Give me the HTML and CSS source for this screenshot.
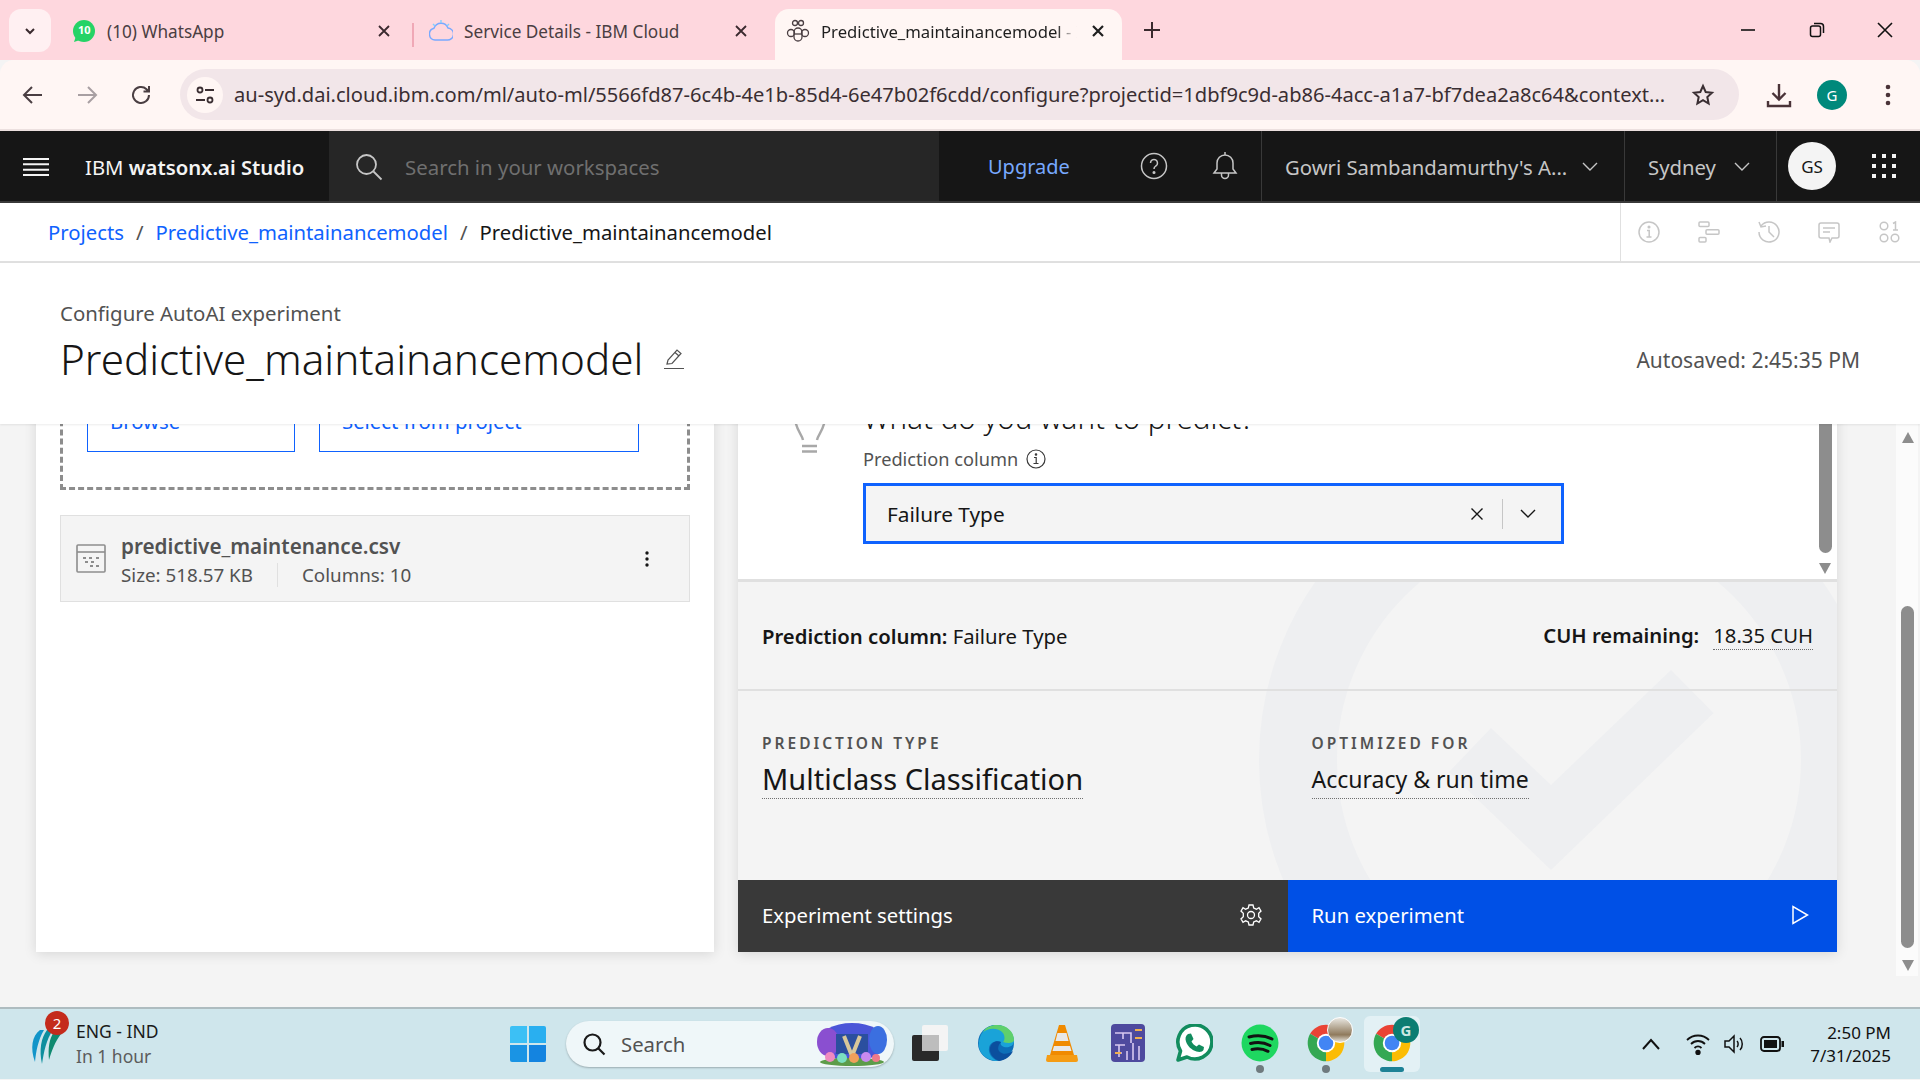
FILE: index.html
```html
<!DOCTYPE html>
<html lang="en">
<head>
    <meta charset="UTF-8">
    <title>Predictive_maintainancemodel - IBM watsonx.ai</title>
    <link rel="stylesheet" href="styles.css">
</head>
<body>
<svg class="defs" width="0" height="0">
    <symbol id="chrome" viewBox="0 0 48 48">
        <path d="M6.7 14A20 20 0 0 1 41.3 14L24 24Z" fill="#ea4335"/>
        <path d="M41.3 14A20 20 0 0 1 24 44L24 24Z" fill="#fbbc04"/>
        <path d="M24 44A20 20 0 0 1 6.7 14L24 24Z" fill="#34a853"/>
        <circle cx="24" cy="24" r="10" fill="#fff"/>
        <circle cx="24" cy="24" r="8" fill="#4285f4"/>
    </symbol>
</svg>

<!-- browser tabs -->
<div class="tabbar">
    <div class="tab-list">
        <svg width="14" height="14" viewBox="0 0 14 14"><path d="M3 5l4 4 4-4" fill="none" stroke="#3a2a2e" stroke-width="2"/></svg>
    </div>
    <div class="tab tab-one">
        <svg class="favicon" width="24" height="24" viewBox="0 0 24 24"><circle cx="12" cy="12" r="11" fill="#25d366"/><path d="M2 23l2-6 4 4z" fill="#25d366"/></svg>
        <span class="wa-count">10</span>
        <span class="tab-title">(10) WhatsApp</span>
        <svg class="tab-x" width="14" height="14" viewBox="0 0 14 14"><path d="M2 2l10 10M12 2L2 12" stroke="#3a2a2e" stroke-width="1.8"/></svg>
    </div>
    <div class="tab-sep"></div>
    <div class="tab tab-two">
        <svg class="favicon" width="24" height="24" viewBox="0 0 24 24" fill="none" stroke-width="1.4"><path d="M6 21a6 6 0 0 1-1-11.800A7.500 7.500 0 0 1 19 9a6 6 0 0 1-1 12z" stroke="#78a9ff"/><path d="M4 5l2 2M12 1v3M20 5l-2 2" stroke="#82cfff"/></svg>
        <span class="tab-title">Service Details - IBM Cloud</span>
        <svg class="tab-x" width="14" height="14" viewBox="0 0 14 14"><path d="M2 2l10 10M12 2L2 12" stroke="#3a2a2e" stroke-width="1.8"/></svg>
    </div>
    <div class="tab tab-active">
        <svg class="favicon" width="24" height="24" viewBox="0 0 24 24" fill="none" stroke="#4a3e42" stroke-width="1.300"><circle cx="9" cy="4" r="2.500"/><circle cx="15" cy="4" r="2.500"/><rect x="8" y="9" width="8" height="13" rx="4"/><circle cx="5" cy="14" r="3.500"/><circle cx="19" cy="14" r="3.500"/><path d="M8 15h8"/></svg>
        <span class="tab-title tab-title-fade">Predictive_maintainancemodel - IBM</span>
        <svg class="tab-x" width="14" height="14" viewBox="0 0 14 14"><path d="M2 2l10 10M12 2L2 12" stroke="#1f1f1f" stroke-width="2.200"/></svg>
    </div>
    <svg class="new-tab" width="18" height="18" viewBox="0 0 18 18"><path d="M9 1v16M1 9h16" stroke="#3a2a2e" stroke-width="2"/></svg>
    <div class="win-ctrls">
        <svg width="16" height="16" viewBox="0 0 16 16"><path d="M1 8h14" stroke="#111" stroke-width="1.600"/></svg>
        <svg width="16" height="16" viewBox="0 0 16 16" fill="none" stroke="#111" stroke-width="1.500"><rect x="1.500" y="4" width="10" height="10.500" rx="2"/><path d="M5 1.500h6.500a3 3 0 0 1 3 3V11"/></svg>
        <svg width="16" height="16" viewBox="0 0 16 16"><path d="M1 1l14 14M15 1L1 15" stroke="#111" stroke-width="1.600"/></svg>
    </div>
</div>

<!-- browser toolbar -->
<div class="toolbar">
    <svg class="tool" width="22" height="22" viewBox="0 0 22 22" fill="none" stroke="#4a3e42" stroke-width="2"><path d="M20 11H3M10 3l-8 8 8 8"/></svg>
    <svg class="tool" width="22" height="22" viewBox="0 0 22 22" fill="none" stroke="#a89fa2" stroke-width="2"><path d="M2 11h17M12 3l8 8-8 8"/></svg>
    <svg class="tool" width="22" height="22" viewBox="0 0 22 22" fill="none" stroke="#4a3e42" stroke-width="2"><path d="M19 11a8 8 0 1 1-2.500-5.800L19 7.500M19 2v5.500h-5.500"/></svg>
    <div class="omnibox">
        <span class="site-info">
            <svg width="22" height="22" viewBox="0 0 22 22" fill="none" stroke="#3a2e32" stroke-width="1.800"><circle cx="6" cy="6" r="2.500"/><path d="M11 6h9M2 16h9"/><circle cx="16" cy="16" r="2.500"/></svg>
        </span>
        <span class="url">au-syd.dai.cloud.ibm.com/ml/auto-ml/5566fd87-6c4b-4e1b-85d4-6e47b02f6cdd/configure?projectid=1dbf9c9d-ab86-4acc-a1a7-bf7dea2a8c64&amp;context...</span>
        <svg class="star" width="24" height="24" viewBox="0 0 24 24" fill="none" stroke="#3a2e32" stroke-width="2"><path d="M12 3l2.700 6 6.300.700-4.700 4.300 1.300 6.500-5.600-3.300-5.600 3.300 1.300-6.500L3 9.700 9.300 9z"/></svg>
    </div>
    <div class="tool-right">
        <svg width="26" height="26" viewBox="0 0 26 26" fill="none" stroke="#4a3338" stroke-width="2.400"><path d="M13 2v15M6.500 11l6.500 6.500 6.500-6.500M2 19v5h22v-5"/></svg>
        <span class="profile">G</span>
        <svg width="6" height="24" viewBox="0 0 6 24" fill="#4a3338"><circle cx="3" cy="4" r="2.300"/><circle cx="3" cy="12" r="2.300"/><circle cx="3" cy="20" r="2.300"/></svg>
    </div>
</div>

<!-- product header -->
<header class="app-header">
    <div class="brand">
        <svg width="26" height="20" viewBox="0 0 26 20" stroke="#f4f4f4" stroke-width="2"><path d="M0 2h26M0 7.300h26M0 12.700h26M0 18h26"/></svg>
        <span class="brand-name">IBM <b>watsonx.ai Studio</b></span>
    </div>
    <div class="app-search">
        <svg width="30" height="30" viewBox="0 0 30 30" fill="none" stroke="#c6c6c6" stroke-width="1.800"><circle cx="12.500" cy="12.500" r="9.500"/><path d="M19.500 19.500l8 8"/></svg>
        <span>Search in your workspaces</span>
    </div>
    <a class="upgrade">Upgrade</a>
    <div class="hdr-icons">
        <svg width="28" height="28" viewBox="0 0 28 28" fill="none" stroke="#c6c6c6" stroke-width="1.500"><circle cx="14" cy="14" r="12.500"/><path d="M10.500 11a3.500 3.500 0 1 1 5.300 3c-1.200.8-1.800 1.500-1.800 3"/><circle cx="14" cy="20.500" r=".8" fill="#c6c6c6"/></svg>
        <svg width="28" height="30" viewBox="0 0 28 30" fill="none" stroke="#c6c6c6" stroke-width="1.500"><path d="M3 22l3-4v-6a8 8 0 0 1 16 0v6l3 4zM14 4V1M10.500 22v2a3.500 3.500 0 0 0 7 0v-2"/></svg>
    </div>
    <div class="hdr-menu hdr-account"><span>Gowri Sambandamurthy's A...</span><svg width="16" height="10" viewBox="0 0 16 10" fill="none" stroke="#c6c6c6" stroke-width="1.400"><path d="M1 1l7 7 7-7"/></svg></div>
    <div class="hdr-menu hdr-region"><span>Sydney</span><svg width="16" height="10" viewBox="0 0 16 10" fill="none" stroke="#c6c6c6" stroke-width="1.400"><path d="M1 1l7 7 7-7"/></svg></div>
    <div class="hdr-user">
        <span class="avatar">GS</span>
        <svg width="24" height="24" viewBox="0 0 24 24" fill="#f4f4f4"><path d="M0 0h4v4H0zM10 0h4v4h-4zM20 0h4v4h-4zM0 10h4v4H0zM10 10h4v4h-4zM20 10h4v4h-4zM0 20h4v4H0zM10 20h4v4h-4zM20 20h4v4h-4z"/></svg>
    </div>
</header>

<!-- breadcrumb -->
<nav class="crumbs">
    <div class="crumb-path">
        <a>Projects</a><span class="slash">/</span><a>Predictive_maintainancemodel</a><span class="slash">/</span><span>Predictive_maintainancemodel</span>
    </div>
    <div class="crumb-tools">
        <svg width="22" height="22" viewBox="0 0 22 22" fill="none" stroke="#c6c6c6" stroke-width="1.500"><circle cx="11" cy="11" r="10"/><path d="M9 9.500h2.200v6.500M8.500 16h5"/><circle cx="11" cy="6" r=".8" fill="#c6c6c6"/></svg>
        <svg width="22" height="22" viewBox="0 0 22 22" fill="none" stroke="#c6c6c6" stroke-width="1.500"><rect x="1" y="1" width="10" height="4.500" rx="1"/><rect x="8" y="8.700" width="13" height="4.500" rx="1"/><rect x="1" y="16.500" width="7" height="4.500" rx="1"/></svg>
        <svg width="22" height="22" viewBox="0 0 22 22" fill="none" stroke="#c6c6c6" stroke-width="1.500"><path d="M3 5a10 10 0 1 1-2 6M1 1l2 5 5-1M11 5v6l5 5"/></svg>
        <svg width="22" height="22" viewBox="0 0 22 22" fill="none" stroke="#c6c6c6" stroke-width="1.500"><path d="M3 2h16a2 2 0 0 1 2 2v11a2 2 0 0 1-2 2h-5l-2 4-1-4H3a2 2 0 0 1-2-2V4a2 2 0 0 1 2-2zM5 7h12M5 11h7"/></svg>
        <svg width="22" height="22" viewBox="0 0 22 22" fill="none" stroke="#c6c6c6" stroke-width="1.500"><circle cx="6" cy="5" r="3.800"/><circle cx="6" cy="17" r="3.800"/><circle cx="17" cy="17" r="3.800"/><path d="M15 2.500L17.500 1v8M15 9h5"/></svg>
    </div>
</nav>

<!-- experiment title -->
<section class="title-bar">
    <div>
        <p class="kicker">Configure AutoAI experiment</p>
        <div class="title-row">
            <h1>Predictive_maintainancemodel</h1>
            <svg width="22" height="22" viewBox="0 0 22 22" fill="none" stroke="#525252" stroke-width="1.200"><path d="M1 20.500h20M4 16l1-4L14 2l4 3.500-9 10zM12 4.500l4 3.500"/></svg>
        </div>
    </div>
    <span class="autosaved">Autosaved: 2:45:35 PM</span>
</section>

<!-- scrolled work area -->
<main class="workspace">
    <section class="data-card">
        <div class="dropzone">
            <a class="btn-ghost btn-browse">Browse</a>
            <a class="btn-ghost btn-project">Select from project</a>
        </div>
        <div class="file-row">
            <svg width="30" height="29" viewBox="0 0 30 29" fill="none" stroke="#8d8d8d" stroke-width="1.600"><rect x="1" y="1" width="28" height="27" rx="1"/><path d="M1 8h28"/><path d="M7 14h3M13 14h3M20 14h3M9 18h3M15 18h3M14 22h3M20 22h3" stroke-width="1.800"/></svg>
            <div class="file-info">
                <div class="file-name">predictive_maintenance.csv</div>
                <div class="file-meta"><span>Size: 518.57 KB</span><i></i><span>Columns: 10</span></div>
            </div>
            <svg class="kebab" width="4" height="16" viewBox="0 0 4 16" fill="#161616"><circle cx="2" cy="2" r="1.700"/><circle cx="2" cy="8" r="1.700"/><circle cx="2" cy="14" r="1.700"/></svg>
        </div>
    </section>

    <section class="predict-card">
        <svg class="watermark" width="1099" height="370" viewBox="0 0 1099 370">
            <circle cx="831" cy="178" r="271" fill="none" stroke="#eeeff1" stroke-width="78"/>
            <path d="M933 88L975.600 131 813 288 711 190 753 146 813 203Z" fill="#eeeff1"/>
        </svg>
        <div class="predict-form">
            <svg class="bulb" width="32" height="60" viewBox="0 0 32 60" fill="none" stroke="#a8a8a8" stroke-width="2.400"><path d="M9 47C8 41 1 36 1 24a15 15 0 0 1 30 0c0 12-7 17-8 23M8 53h15M8 58.500h15"/></svg>
            <div class="form-fields">
                <h2>What do you want to predict?</h2>
                <div class="field-label">Prediction column
                    <svg width="20" height="20" viewBox="0 0 20 20" fill="none" stroke="#393939" stroke-width="1.200"><circle cx="10" cy="10" r="9"/><path d="M8 8.500h2.200v6M7.500 14.500h5"/><circle cx="10" cy="5.500" r=".7" fill="#393939"/></svg>
                </div>
                <div class="combo">
                    <span class="combo-value">Failure Type</span>
                    <svg width="14" height="14" viewBox="0 0 14 14"><path d="M1.500 1.500l11 11M12.500 1.500l-11 11" stroke="#161616" stroke-width="1.400"/></svg>
                    <i class="combo-sep"></i>
                    <svg width="16" height="10" viewBox="0 0 16 10" fill="none" stroke="#161616" stroke-width="1.400"><path d="M1 1l7 7 7-7"/></svg>
                </div>
            </div>
            <div class="inner-thumb"></div>
            <div class="inner-arrow"></div>
        </div>
        <div class="summary">
            <div><b>Prediction column:</b> Failure Type</div>
            <div class="cuh"><b>CUH remaining:</b><span class="dotted">18.35 CUH</span></div>
        </div>
        <div class="stats">
            <div class="stat">
                <div class="stat-label">PREDICTION TYPE</div>
                <span class="stat-value stat-large dotted">Multiclass Classification</span>
            </div>
            <div class="stat">
                <div class="stat-label">OPTIMIZED FOR</div>
                <span class="stat-value dotted">Accuracy &amp; run time</span>
            </div>
        </div>
        <div class="actions">
            <a class="action action-dark">Experiment settings
                <svg width="22" height="22" viewBox="0 0 22 22" fill="none" stroke="#fff" stroke-width="1.300"><circle cx="11" cy="11" r="3.500"/><path d="M9 1h4l.7 3 2.700 1.200 2.600-1.500 2 3.400-2.300 2.100v3.600l2.300 2.100-2 3.400-2.600-1.500-2.700 1.200-.7 3H9l-.7-3-2.700-1.200L3 18.300l-2-3.400 2.300-2.100V9.200L1 7.100l2-3.400 2.600 1.500 2.700-1.200z"/></svg>
            </a>
            <a class="action action-run">Run experiment
                <svg width="18" height="20" viewBox="0 0 18 20" fill="none" stroke="#fff" stroke-width="1.500"><path d="M2 1.500v17L16.500 10z"/></svg>
            </a>
        </div>
    </section>

    <div class="page-scroll">
        <span class="arrow-up"></span>
        <span class="page-thumb"></span>
        <span class="arrow-down"></span>
    </div>
</main>

<!-- windows taskbar -->
<footer class="taskbar">
    <div class="widget">
        <svg width="34" height="44" viewBox="0 0 34 44"><path d="M10 8C2 14 0 26 5 40c1-10 3-22 9-32z" fill="#1295c9"/><path d="M17 8c-6 8-8 20-5 34 2-12 4-24 11-34z" fill="#0d8f9e"/><path d="M24 10c-5 7-6 16-5 28 3-10 6-18 12-26z" fill="#0f8a70"/></svg>
        <span class="widget-badge">2</span>
        <div class="widget-text"><div>ENG - IND</div><div class="widget-sub">In 1 hour</div></div>
    </div>
    <div class="task-center">
        <svg class="win-logo" width="36" height="36" viewBox="0 0 36 36"><path d="M0 2a2 2 0 0 1 2-2h15v17H0z" fill="#3cc0f5"/><path d="M19 0h15a2 2 0 0 1 2 2v15H19z" fill="#29aff0"/><path d="M0 19h17v17H2a2 2 0 0 1-2-2z" fill="#1a94e4"/><path d="M19 19h17v15a2 2 0 0 1-2 2H19z" fill="#1484e0"/></svg>
        <div class="task-search">
            <svg width="24" height="24" viewBox="0 0 24 24" fill="none" stroke="#1a1a1a" stroke-width="2.200"><circle cx="10.500" cy="10.500" r="8"/><path d="M16.500 16.500l6 6"/></svg>
            <span>Search</span>
            <svg class="search-art" width="72" height="44" viewBox="0 0 72 44"><ellipse cx="36" cy="20" rx="34" ry="19" fill="#4a55d8"/><ellipse cx="12" cy="20" rx="11" ry="14" fill="#8a4fd0"/><ellipse cx="62" cy="18" rx="9" ry="14" fill="#3b6fe0"/><rect x="20" y="12" width="32" height="20" fill="#2b4f9e"/><path d="M28 14l8 20 8-20" fill="none" stroke="#d8c79a" stroke-width="4"/><ellipse cx="36" cy="40" rx="32" ry="4" fill="#5d9c4a"/><circle cx="14" cy="35" r="5" fill="#f08ac0"/><circle cx="26" cy="36" r="5" fill="#7be0c0"/><circle cx="38" cy="36" r="5" fill="#f0a05a"/><circle cx="50" cy="35" r="5" fill="#c88af0"/><circle cx="60" cy="36" r="4" fill="#f07a8a"/></svg>
        </div>
        <div class="task-apps">
            <span class="task-slot"><svg width="38" height="38" viewBox="0 0 38 38"><rect x="1" y="11" width="27" height="26" rx="2" fill="#2a2a2a"/><rect x="11" y="1" width="26" height="26" rx="2" fill="#f4f4f4"/><rect x="11" y="11" width="17" height="16" fill="#bdbdbd"/></svg></span>
            <span class="task-slot"><svg width="38" height="38" viewBox="0 0 38 38"><circle cx="19" cy="19" r="18" fill="#0d6fb8"/><path d="M2 17C4 6 12 1 20 1c9 0 17 7 17 16 0 5-5 7-10 6-3-1-4-3-3-5-5-2-11 0-12 6-1 5 3 11 9 13C11 37 0 30 2 17z" fill="#1aa3d8"/><path d="M37 16c0-9-8-15-17-15-6 0-11 2-14 7 5-4 15-5 20 1 2 3 2 7 0 9 5 2 11 1 11-2z" fill="#5fd06c"/><path d="M24 18c-5-2-10 1-11 6-1 6 4 11 9 13 7-1 12-5 14-10-4 3-10 4-13 1-3-2-2-7 1-10z" fill="#0b4f9e"/></svg></span>
            <span class="task-slot"><svg width="32" height="38" viewBox="0 0 32 38"><path d="M13 1h6l9 30H4z" fill="#f08a00"/><path d="M11.500 9h9l2 8h-13zM8 22h16l1.500 5h-19z" fill="#e8e8e8"/><path d="M1 31h30l1 5a2 2 0 0 1-2 2H2a2 2 0 0 1-2-2z" fill="#f59c14"/></svg></span>
            <span class="task-slot"><svg width="34" height="38" viewBox="0 0 34 38"><rect width="34" height="38" rx="4" fill="#4e4a9e"/><path d="M4 9h16v10M24 6h7M24 14h7M4 29h7M4 21h10M8 21v12M16 27v9M22 19v17M28 22v14M12 9v6" fill="none" stroke="#d8c8f0" stroke-width="1.600"/><path d="M24 6h7M24 14h7M4 29h6" stroke="#f0b050" stroke-width="2"/></svg></span>
            <span class="task-slot"><svg width="38" height="38" viewBox="0 0 38 38"><path d="M3 36l2.500-9A17 17 0 1 1 12 33z" fill="#fff" stroke="#128c5e" stroke-width="3.600" stroke-linejoin="round"/><path d="M13 10l3-.5 2.500 5.500-2 2.500c1 2.200 3 4 5 5l2.500-2 5 2.500-.5 3c-1 2-4 2.500-7 1.500-5-1.500-9-5.500-10.500-10-1-3-.5-6 2-7.500z" fill="#128c5e"/></svg></span>
            <span class="task-slot">
                <svg width="38" height="38" viewBox="0 0 38 38" fill="none"><circle cx="19" cy="19" r="18.500" fill="#1ed760"/><path d="M8 13c8-2 16-1.500 23 2M9.500 19.500c7-1.800 14-1 19.500 2M11 25.500c6-1.400 11-.8 16 1.800" stroke="#121212" stroke-width="3" stroke-linecap="round"/></svg>
                <i class="run-dot"></i>
            </span>
            <span class="task-slot">
                <svg width="44" height="44"><use href="#chrome"/></svg>
                <span class="chrome-badge badge-photo"></span>
                <i class="run-dot"></i>
            </span>
            <span class="task-slot task-active">
                <svg width="44" height="44"><use href="#chrome"/></svg>
                <span class="chrome-badge badge-g">G</span>
                <i class="run-bar"></i>
            </span>
        </div>
    </div>
    <div class="tray">
        <svg width="18" height="12" viewBox="0 0 18 12" fill="none" stroke="#111" stroke-width="2"><path d="M1 11l8-9 8 9"/></svg>
        <svg width="24" height="22" viewBox="0 0 24 22" fill="none" stroke="#111" stroke-width="1.800"><path d="M1 7c6-6 16-6 22 0M5 11c4-4 10-4 14 0M8.500 15c2-2 5-2 7 0"/><circle cx="12" cy="19.500" r="1.800" fill="#111"/></svg>
        <svg width="22" height="22" viewBox="0 0 22 22" fill="none" stroke="#111" stroke-width="1.500"><path d="M2 8v6h4l5 5V3L6 8zM14 8c1.500 1.500 1.500 4.500 0 6M17 5c3 3 3 9 0 12"/></svg>
        <svg width="24" height="16" viewBox="0 0 24 16"><rect x="1" y="1" width="19" height="14" rx="3" fill="none" stroke="#111" stroke-width="1.800"/><rect x="4" y="4" width="13" height="8" fill="#111"/><rect x="21.500" y="5" width="2.500" height="6" fill="#111"/></svg>
        <div class="clock"><div>2:50 PM</div><div>7/31/2025</div></div>
    </div>
</footer>
</body>
</html>
```

FILE: styles.css
```css
*{
    margin: 0;
    padding: 0;
    box-sizing: border-box;
}
html,body{
    width: 1920px;
    height: 1080px;
    overflow: hidden;
}
body{
    display: flex;
    flex-direction: column;
    font-family: "Noto Sans", "Liberation Sans", sans-serif;
    font-size: 20.300px;
    color: #161616;
    background: #f4f4f4;
}
.defs{
    position: absolute;
}

/* browser tabs */
.tabbar{
    height: 60px;
    flex: none;
    display: flex;
    align-items: flex-end;
    background: #fed7de;
    font-size: 17.200px;
    color: #4a3e42;
}
.tab-list{
    width: 42px;
    height: 43px;
    margin: 0 0 8px 9px;
    display: flex;
    align-items: center;
    justify-content: center;
    background: #fff0f2;
    border-radius: 12px;
}
.tab{
    height: 51px;
    flex: none;
    display: flex;
    align-items: center;
    padding-bottom: 7px;
    position: relative;
}
.tab-one{
    width: 349px;
    margin-left: 12px;
    padding-left: 9px;
}
.tab-two{
    width: 361px;
    padding-left: 15px;
}
.tab-sep{
    width: 2px;
    height: 24px;
    margin-bottom: 13px;
    background: #f0a8b6;
}
.favicon{
    flex: none;
}
.wa-count{
    position: absolute;
    left: 15px;
    top: 13px;
    font-size: 11px;
    font-weight: 700;
    color: #fff;
}
.tab-title{
    margin-left: 11px;
    width: 260px;
    white-space: nowrap;
    overflow: hidden;
}
.tab-x{
    position: absolute;
    right: 21px;
    top: 15px;
}
.tab-two .tab-x{
    right: 27px;
}
.tab-active{
    width: 347px;
    padding-left: 11px;
    background: #fff6f4;
    border-radius: 14px 14px 0 0;
    color: #1f1f1f;
}
.tab-active .tab-x{
    right: 17px;
}
.tab-active .tab-title{
    width: 256px;
    font-size: 16.700px;
}
.tab-title-fade{
    -webkit-mask-image: linear-gradient(90deg, #000 92%, transparent);
    mask-image: linear-gradient(90deg, #000 92%, transparent);
}
.new-tab{
    margin: 0 0 21px 21px;
}
.win-ctrls{
    margin-left: auto;
    width: 180px;
    padding-right: 27px;
    margin-bottom: 22px;
    display: flex;
    justify-content: space-between;
}

/* browser toolbar */
.toolbar{
    height: 71px;
    flex: none;
    display: flex;
    align-items: center;
    background: #fff6f4;
    border-bottom: 2px solid #ece0df;
    border-radius: 14px 14px 0 0;
    padding-left: 22px;
}
.tool{
    margin-right: 32px;
    flex: none;
}
.omnibox{
    width: 1559px;
    height: 51px;
    margin-left: -4px;
    flex: none;
    display: flex;
    align-items: center;
    background: #f2e6e9;
    border-radius: 26px;
    padding-left: 7px;
}
.site-info{
    width: 36px;
    height: 36px;
    flex: none;
    display: flex;
    align-items: center;
    justify-content: center;
    background: #fff6f4;
    border-radius: 50%;
}
.url{
    margin-left: 11px;
    width: 1432px;
    flex: none;
    white-space: nowrap;
    font-size: 20.100px;
    color: #3a2e32;
}
.star{
    margin-left: 25px;
    flex: none;
}
.tool-right{
    flex: 1;
    display: flex;
    align-items: center;
    padding-left: 27px;
}
.profile{
    width: 30px;
    height: 30px;
    margin: 0 38px 0 25px;
    display: flex;
    align-items: center;
    justify-content: center;
    border-radius: 50%;
    background: #00897b;
    color: #fff;
    font-size: 15px;
}

/* product header */
.app-header{
    height: 72px;
    flex: none;
    display: flex;
    align-items: stretch;
    background: #161616;
    border-bottom: 2px solid #393939;
    color: #c6c6c6;
}
.brand{
    width: 329px;
    display: flex;
    align-items: center;
    padding: 1px 0 0 23px;
    color: #f4f4f4;
}
.brand-name{
    margin-left: 36px;
}
.brand-name b{
    font-weight: 600;
}
.app-search{
    width: 610px;
    display: flex;
    align-items: center;
    gap: 21px;
    padding: 1px 0 0 25px;
    background: #262626;
    color: #6f6f6f;
    font-size: 20.400px;
}
.upgrade{
    width: 179px;
    display: flex;
    align-items: center;
    padding: 1px 0 0 49px;
    color: #78a9ff;
    font-size: 20px;
}
.hdr-icons{
    width: 143px;
    display: flex;
    align-items: center;
    justify-content: center;
    gap: 43px;
}
.hdr-menu{
    display: flex;
    align-items: center;
    justify-content: space-between;
    border-left: 1px solid #393939;
    white-space: nowrap;
    padding: 1px 26px 0 23px;
}
.hdr-account{
    width: 363px;
}
.hdr-region{
    width: 152px;
}
.hdr-user{
    flex: 1;
    display: flex;
    align-items: center;
    border-left: 1px solid #393939;
    padding-left: 11px;
    gap: 36px;
}
.avatar{
    width: 48px;
    height: 48px;
    display: flex;
    align-items: center;
    justify-content: center;
    border-radius: 50%;
    background: #f4f4f4;
    color: #161616;
    font-size: 17px;
}

/* breadcrumb */
.crumbs{
    height: 60px;
    flex: none;
    display: flex;
    background: #fff;
    border-bottom: 2px solid #e0e0e0;
}
.crumb-path{
    width: 1620px;
    display: flex;
    align-items: center;
    padding-left: 48px;
    white-space: nowrap;
    color: #161616;
}
.crumb-path a{
    color: #0f62fe;
}
.slash{
    margin: 0 12px;
    color: #525252;
}
.crumb-tools{
    flex: 1;
    display: flex;
    align-items: center;
    justify-content: space-between;
    border-left: 1px solid #e0e0e0;
    padding: 0 20px 0 17px;
}

/* experiment title */
.title-bar{
    height: 161px;
    flex: none;
    display: flex;
    justify-content: space-between;
    align-items: flex-start;
    background: #fff;
    padding: 36px 60px 0;
    box-shadow: 0 1px 2px rgba(0,0,0,.08);
    position: relative;
    z-index: 1;
}
.kicker{
    font-size: 20.400px;
    line-height: 28px;
    color: #525252;
}
.title-row{
    display: flex;
    align-items: center;
    gap: 20px;
    margin-top: 6px;
}
h1{
    font-size: 42.200px;
    line-height: 52px;
    font-weight: 300;
}
.autosaved{
    margin-top: 45px;
    font-size: 21px;
    line-height: 32px;
    color: #525252;
}

/* work area */
.workspace{
    height: 583px;
    flex: none;
    display: flex;
    align-items: flex-start;
    overflow: hidden;
    padding-left: 36px;
    background: #f4f4f4;
    position: relative;
}
.data-card{
    width: 678px;
    height: 588px;
    flex: none;
    margin-top: -60px;
    padding: 20px 24px 0;
    background: #fff;
    box-shadow: 0 2px 12px rgba(0,0,0,.12);
}
.dropzone{
    height: 106px;
    display: flex;
    gap: 24px;
    align-items: flex-end;
    padding: 0 24px 35px;
    border: 3px dashed #8d8d8d;
    border-top: none;
}
.btn-ghost{
    height: 60px;
    flex: none;
    display: flex;
    align-items: center;
    padding: 0 0 2px 22px;
    border: 1px solid #0f62fe;
    color: #0f62fe;
}
.btn-browse{
    width: 208px;
}
.btn-project{
    width: 320px;
}
.file-row{
    height: 87px;
    margin-top: 25px;
    display: flex;
    align-items: center;
    padding: 0 40px 0 15px;
    background: #f4f4f4;
    border: 1px solid #e0e0e0;
}
.file-info{
    flex: 1;
    margin-left: 15px;
}
.file-name{
    font-size: 20.700px;
    line-height: 26px;
    font-weight: 600;
    color: #525252;
    margin-top: 2px;
}
.file-meta{
    display: flex;
    align-items: center;
    margin-top: 4px;
    font-size: 18.800px;
    line-height: 24px;
    color: #525252;
}
.file-meta i{
    width: 1px;
    height: 24px;
    margin: 0 24px;
    background: #e0e0e0;
}

.predict-card{
    width: 1099px;
    height: 588px;
    flex: none;
    margin: -60px 0 0 24px;
    display: flex;
    flex-direction: column;
    background: #f4f4f4;
    box-shadow: 0 2px 12px rgba(0,0,0,.12);
    position: relative;
}
.watermark{
    position: absolute;
    left: 0;
    top: 218px;
}
.predict-form{
    height: 218px;
    flex: none;
    display: flex;
    align-items: flex-start;
    padding: 29px 0 0 56px;
    background: #fff;
    border-bottom: 3px solid #e0e0e0;
    position: relative;
}
.bulb{
    flex: none;
}
.form-fields{
    margin-left: 37px;
    margin-top: 7px;
}
h2{
    font-size: 29.500px;
    line-height: 36px;
    font-weight: 300;
}
.field-label{
    margin-top: 11px;
    display: flex;
    align-items: center;
    gap: 8px;
    font-size: 18.200px;
    line-height: 24px;
    color: #525252;
}
.combo{
    width: 701px;
    height: 61px;
    margin-top: 12px;
    display: flex;
    align-items: center;
    padding: 0 25px 0 21px;
    background: #f4f4f4;
    border: 3px solid #0f62fe;
}
.combo-value{
    flex: 1;
    font-size: 20.800px;
}
.combo-sep{
    width: 1px;
    height: 30px;
    margin: 0 17px 0 18px;
    background: #c6c6c6;
}
.inner-thumb{
    position: absolute;
    left: 1081px;
    top: 0;
    width: 13px;
    height: 189px;
    background: #8d8d8d;
    border-radius: 0 0 7px 7px;
}
.inner-arrow{
    position: absolute;
    left: 1081px;
    top: 199px;
    border-left: 6.500px solid transparent;
    border-right: 6.500px solid transparent;
    border-top: 11px solid #8d8d8d;
}
.summary{
    height: 109px;
    flex: none;
    display: flex;
    align-items: center;
    justify-content: space-between;
    padding: 0 24px;
    border-bottom: 2px solid #e0e0e0;
    position: relative;
}
.summary b{
    font-weight: 600;
}
.cuh{
    display: flex;
    gap: 14px;
}
.dotted{
    border-bottom: 1px dotted #6f6f6f;
}
.stats{
    height: 189px;
    flex: none;
    display: grid;
    grid-template-columns: 1fr 1fr;
    padding-top: 42px;
    position: relative;
}
.stat{
    padding-left: 24px;
}
.stat-label{
    font-size: 15.500px;
    line-height: 20px;
    font-weight: 600;
    letter-spacing: 3px;
    color: #525252;
}
.stat-value{
    display: inline-block;
    height: 39px;
    margin-top: 7px;
    font-size: 23px;
    line-height: 38px;
}
.stat-large{
    font-size: 29px;
}
.actions{
    height: 72px;
    flex: none;
    display: grid;
    grid-template-columns: 1fr 1fr;
    position: relative;
}
.action{
    display: flex;
    align-items: center;
    justify-content: space-between;
    padding: 0 26px 2px 24px;
    color: #fff;
}
.action-dark{
    background: #393939;
}
.action-run{
    background: #0050e6;
    padding-right: 28px;
}
.page-scroll{
    position: absolute;
    left: 1896px;
    top: 0;
    width: 22px;
    height: 552px;
    background: #fbfbfb;
}
.page-thumb{
    position: absolute;
    left: 5px;
    top: 182px;
    width: 13px;
    height: 342px;
    background: #8d8d8d;
    border-radius: 7px;
}
.arrow-up,.arrow-down{
    position: absolute;
    left: 6px;
    border-left: 6.500px solid transparent;
    border-right: 6.500px solid transparent;
}
.arrow-up{
    top: 8px;
    border-bottom: 11px solid #8d8d8d;
}
.arrow-down{
    top: 536px;
    border-top: 11px solid #8d8d8d;
}

/* windows taskbar */
.taskbar{
    height: 72px;
    flex: none;
    display: flex;
    align-items: center;
    background: #cfe6ec;
    border-top: 2px solid #aebcc0;
}
.widget{
    width: 510px;
    display: flex;
    align-items: center;
    padding-left: 30px;
    position: relative;
}
.widget-badge{
    position: absolute;
    left: 45px;
    top: -8px;
    width: 24px;
    height: 24px;
    display: flex;
    align-items: center;
    justify-content: center;
    border-radius: 50%;
    background: #c42b1c;
    color: #fff;
    font-size: 15px;
}
.widget-text{
    margin-left: 12px;
    font-size: 17.500px;
    line-height: 25px;
    color: #1a1a1a;
}
.widget-sub{
    color: #5c5c5c;
}
.task-center{
    display: flex;
    align-items: center;
}
.win-logo{
    flex: none;
}
.task-search{
    width: 328px;
    height: 46px;
    margin-left: 20px;
    display: flex;
    align-items: center;
    gap: 15px;
    padding-left: 16px;
    background: #eff7f9;
    border-radius: 23px;
    box-shadow: 0 1px 2px rgba(0,0,0,.25);
    color: #525252;
    position: relative;
}
.search-art{
    position: absolute;
    right: 6px;
    top: 1px;
}
.task-apps{
    display: flex;
    margin-left: 3px;
}
.task-slot{
    width: 66px;
    height: 56px;
    flex: none;
    display: flex;
    align-items: center;
    justify-content: center;
    padding-bottom: 2px;
    position: relative;
}
.task-active::before{
    content: "";
    position: absolute;
    left: 5px;
    right: 5px;
    top: 0;
    bottom: 0;
    background: #e3f1f5;
    border-radius: 6px;
}
.task-slot svg{
    position: relative;
}
.chrome-badge{
    position: absolute;
    left: 34px;
    top: 1px;
    width: 26px;
    height: 26px;
    display: flex;
    align-items: center;
    justify-content: center;
    border-radius: 50%;
    font-size: 15px;
    font-weight: 700;
    color: #cde8e4;
}
.badge-photo{
    background: linear-gradient(#e8e6e0, #8f7a5c 70%, #e8e6e0);
    border: 1px solid #fff;
}
.badge-g{
    background: #0c7d72;
}
.run-dot{
    position: absolute;
    left: 50%;
    bottom: -1px;
    width: 8px;
    height: 8px;
    margin-left: -4px;
    border-radius: 50%;
    background: #6f7a7e;
}
.run-bar{
    position: absolute;
    left: 50%;
    bottom: 0;
    width: 24px;
    height: 5px;
    margin-left: -12px;
    border-radius: 3px;
    background: #1d8296;
}
.tray{
    margin-left: auto;
    display: flex;
    align-items: center;
    padding-right: 29px;
}
.tray svg:nth-child(1){
    margin-right: 26px;
}
.tray svg:nth-child(2){
    margin-right: 13px;
}
.tray svg:nth-child(3){
    margin-right: 15px;
}
.clock{
    margin-left: 26px;
    text-align: right;
    font-size: 17px;
    line-height: 23px;
    color: #111;
}
```
